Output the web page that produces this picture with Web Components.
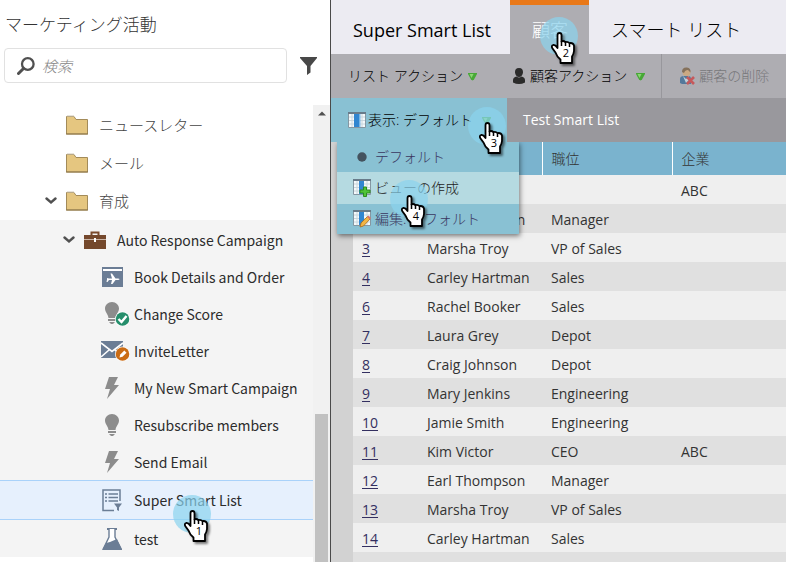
<!DOCTYPE html>
<html lang="ja">
<head>
<meta charset="utf-8">
<title>マーケティング活動</title>
<style>
html, body { margin: 0; height: 100%; }
body { background: #fff; font-family: "Open Sans", "Noto Sans CJK JP", sans-serif; font-size: 14px; color: #333; overflow: hidden; }
</style>
</head>
<body>
<app-shell>
  <activity-panel slot="side" heading="マーケティング活動">
    <tree-item level="1" icon="folder">ニュースレター</tree-item>
    <tree-item level="1" icon="folder">メール</tree-item>
    <tree-item level="1" icon="folder" expanded>育成</tree-item>
    <tree-group>
      <tree-item level="2" icon="case" expanded>Auto Response Campaign</tree-item>
      <tree-item level="3" icon="event">Book Details and Order</tree-item>
      <tree-item level="3" icon="bulbok">Change Score</tree-item>
      <tree-item level="3" icon="mail">InviteLetter</tree-item>
      <tree-item level="3" icon="bolt">My New Smart Campaign</tree-item>
      <tree-item level="3" icon="bulb">Resubscribe members</tree-item>
      <tree-item level="3" icon="bolt">Send Email</tree-item>
      <tree-item level="3" icon="smart" selected>Super Smart List<click-marker slot="marker" style="left:173px;top:14px">1</click-marker></tree-item>
      <tree-item level="3" icon="flask">test</tree-item>
    </tree-group>
  </activity-panel>
  <list-workspace></list-workspace>
</app-shell>

<script>
const ICONS = {
  folder: [22, 20, '<path d="M.5 1.5h7.5l2 3h11.500v14.500h-21z" fill="#e5c680" stroke="#a38b59"/><path d="M1 1h7" stroke="#cfc7b5"/><path d="M0 19h22" stroke="#8d7648"/>'],
  case: [22, 18, '<path d="M7.500 4V1.500h7V4" fill="none" stroke="#7a4a2c" stroke-width="2"/><path d="M0 4h22v4H0zM0 9h10v2h2V9h10v9H0z" fill="#74482c"/><path d="M0 8.500h22" stroke="#c9b4a6"/><path d="M10 7h2v4h-2z" fill="#fff"/>'],
  event: [21, 20, '<path d="M0 0h21v20H0z" fill="#6b7d95"/><path d="M1 2h19v2H1z" fill="#fff"/><path d="M5 11l2 .5h3L8.500 6.500h1.500l3.500 5h2.500c2 0 2 1.500 0 1.500h-2.500l-3 4H9l1-4H7l-1.500 2h-1l.5-2.500z" fill="#fff"/>'],
  bulb: [14, 22, '<path d="M7 0C3 0 0 3 0 6.500 0 10 3 12 3.500 16h7C11 12 14 10 14 6.500 14 3 11 0 7 0zM3 17h8v2H3zM4 20h6l-2 2H6z" fill="#8c8c8c"/>'],
  bulbok: [25, 24, '<path d="M7 0C3 0 0 3 0 6.500 0 10 3 12 3.500 16h7C11 12 14 10 14 6.500 14 3 11 0 7 0zM3 17h8v2H3zM4 20h6l-2 2H6z" fill="#8c8c8c"/><circle cx="17.500" cy="17" r="7.500" fill="#fff"/><circle cx="17.500" cy="17" r="6.800" fill="#258e6b"/><path d="M13.500 17l3 3 5-6" fill="none" stroke="#fff" stroke-width="2.400"/>'],
  mail: [29, 21, '<path d="M0 1h22v17H0z" fill="#6b7d95"/><path d="M0 3l11 8.500L22 3M0 17l8-7M22 17l-8-7" fill="none" stroke="#fff" stroke-width="1.600"/><circle cx="21.500" cy="14" r="7.500" fill="#fff"/><circle cx="21.500" cy="14" r="6.800" fill="#cb6c14"/><path d="M18.500 17.500l.8-3 4-4 2.200 2.200-4 4z" fill="#fff"/>'],
  bolt: [16, 22, '<path d="M5 0h9l-4 8h5L3 22l3-10H1z" fill="#8c8c8c"/>'],
  smart: [20, 23, '<path d="M12 21.500H1V1h17v11" fill="none" stroke="#6b7d95" stroke-width="1.500"/><path d="M3 5h2M3 8.500h2M3 12h2M6.500 5h9.500M6.500 8.500h9.500M6.500 12h9.500" stroke="#6b7d95" stroke-width="1.700"/><path d="M12 14.500h8l-3 4V22l-2-1v-2.500z" fill="#6b7d95"/>'],
  flask: [20, 22, '<path d="M5 1h10" stroke="#6b7d95" stroke-width="2"/><path d="M7 1v8L1.500 20.500h17L13 9V1" fill="#fff" stroke="#6b7d95" stroke-width="1.400"/><path d="M4 15l4-1 7-3 5 10v1H0z" fill="#6b7d95"/>'],
  chevron: [12, 8, '<path d="M1.500 1.500L6 5.500l4.500-4" fill="none" stroke="#505050" stroke-width="2.400" stroke-linecap="round"/>'],
  search: [18, 18, '<circle cx="10.800" cy="7" r="5.800" fill="none" stroke="#505050" stroke-width="2.300"/><path d="M6.500 11.500L1.500 16.500" stroke="#505050" stroke-width="3" stroke-linecap="round"/>'],
  funnel: [17, 18, '<path d="M0 0h17v1l-6.500 8v6.500L7 18V9L0 1z" fill="#484848"/>'],
  up: [8, 5, '<path d="M0 4.500L4 .5l4 4z" fill="#505050"/>'],
  caret: [9, 9, '<path d="M0 1h9v1L6 7.500 4.500 8.500 3 7.500 0 2z" fill="#47a836"/><path d="M1.500 2h4L3.500 6z" fill="#8bd673"/>'],
  person: [12, 16, '<path d="M6 0C3 0 1.800 2 2 4.500 2.200 7 4 9 6 9s3.800-2 4-4.500C10.200 2 9 0 6 0zM0 12c0-2 1.500-3 3.500-3.500Q6 10.500 8.500 8.500C10.500 9 12 10 12 12v2.500Q9 16 6 16T0 14.500z" fill="#2b2b2b"/>'],
  remove: [17, 18, '<path d="M1 16V12q0-3 4-3h4q3 0 3 3v5H3z" fill="#54799b"/><path d="M4 9l3 3 3-3v4l-3 3z" fill="#c3d0d8"/><circle cx="7.500" cy="5" r="4" fill="#cba982"/><path d="M3 5q0-5 5-4.500 4 .5 3.500 5L9 3q-3 0-4 3z" fill="#85715b"/><path d="M8 10l7 7M15 10l-7 7" stroke="#c6595b" stroke-width="2.600"/>'],
  grid: [18, 16, '<path d="M.5.500h17v15H.5z" fill="#f5f9fb" stroke="#8597a2"/><path d="M0 1h18" stroke="#687b8a" stroke-width="2"/><path d="M1 5h16M1 8.500h16M1 12h16M4 2v13M14 2v13" stroke="#c8d6dd"/><path d="M6 2h5v13H6z" fill="#3186d0"/><path d="M11 2h1.500v13H11z" fill="#79b6e5"/>'],
  gridadd: [18, 18, '<path d="M.5.500h17v15H.5z" fill="#f5f9fb" stroke="#8597a2"/><path d="M0 1h18" stroke="#687b8a" stroke-width="2"/><path d="M1 5h16M1 8.500h16M1 12h16M4 2v13M14 2v13" stroke="#c8d6dd"/><path d="M6 2h5v13H6z" fill="#3186d0"/><path d="M10.500 8h3v3h3.500v3h-3.500v3.500h-3V14H7v-3h3.500z" fill="#4fc337" stroke="#2c8c1c"/>'],
  gridedit: [18, 18, '<path d="M.5.500h17v15H.5z" fill="#f5f9fb" stroke="#8597a2"/><path d="M0 1h18" stroke="#687b8a" stroke-width="2"/><path d="M1 5h16M1 8.500h16M1 12h16M4 2v13M14 2v13" stroke="#c8d6dd"/><path d="M6 2h5v13H6z" fill="#3186d0"/><path d="M7 17l1-4 6.500-6.500 2.500 2.500L10.500 16z" fill="#f2b544" stroke="#a86b1c" stroke-width=".8"/><path d="M14 7l1.500-1.500L18 8l-1.200 1.200z" fill="#d9746f"/>'],
  dot: [10, 10, '<circle cx="5" cy="5" r="4.700" fill="#44535f"/>'],
  hand: [26, 34, '<path d="M6.500 14V3.200q0-2.200 2-2.200t2 2.200V9.500q1.800-1.200 4 .7 2-1 4 .9 3.500-.6 4.500 2.400v5.500q-.3 3-2 5.500V31H9.500v-3.500Q6 25 4.500 20.500L1.200 16q-1-2.500 1-3 2-.4 4.300 3z" fill="#fff" stroke="#000" stroke-width="1.800" stroke-linejoin="round"/><path d="M10.500 9v5M14.500 10.500V14M18.500 11.500V15" stroke="#000" stroke-width="1.500"/>']
};

function define(name, markup, setup) {
  const template = document.createElement('template');
  template.innerHTML = markup;
  customElements.define(name, class extends HTMLElement {
    constructor() {
      super();
      this.attachShadow({ mode: 'open' }).append(template.content.cloneNode(true));
    }
    connectedCallback() { if (setup) setup(this, this.shadowRoot); }
  });
}

define('ui-icon', '<style>:host{display:inline-flex;flex:none}svg{display:block}</style><span></span>', (el, root) => {
  const [w, h, body] = ICONS[el.getAttribute('name')];
  root.querySelector('span').innerHTML = `<svg width="${w}" height="${h}" viewBox="0 0 ${w} ${h}" aria-hidden="true">${body}</svg>`;
});

define('click-marker', `<style>
  :host{position:absolute;z-index:20;width:38px;height:38px;pointer-events:none;font:11px/12px "Open Sans",sans-serif;color:#000}
  .halo{width:38px;height:38px;border-radius:50%;background:#8ad3ee;opacity:.7}
  ui-icon{position:absolute;left:11px;top:15px;filter:drop-shadow(2px 2px 1px rgba(0,0,0,.5))}
  .num{position:absolute;left:20px;top:30px;width:12px;text-align:center}
</style><div class="halo"></div><ui-icon name="hand"></ui-icon><span class="num"><slot></slot></span>`);

define('app-shell', `<style>
  :host{display:grid;grid-template-columns:330px minmax(0,1fr);height:100vh;overflow:hidden}
  main{display:grid;border-left:1px solid #4a4a4a;min-width:0;overflow:hidden}
</style><slot name="side"></slot><main><slot></slot></main>`);

define('activity-panel', `<style>
  :host{display:flex;flex-direction:column;min-height:0;font-family:"Noto Sans CJK JP",sans-serif}
  h1{margin:0;padding:11px 5px 10px;font-size:17px;line-height:26px;font-weight:300;color:#333}
  form{display:flex;align-items:center;gap:13px;padding:1px 13px 0 4px;margin:0}
  label{flex:1;display:flex;align-items:center;gap:7px;box-sizing:border-box;height:35px;border:1px solid #e1e1e1;border-radius:4px;padding:0 12px}
  input{flex:1;min-width:0;border:0;outline:0;padding:0;background:none;font:italic 300 15px/24px "Noto Sans CJK JP",sans-serif}
  input::placeholder{color:#888;opacity:1}
  button{border:0;background:none;padding:0;display:flex}
  .body{flex:1;min-height:0;display:flex;margin-top:22px}
  nav{flex:1;min-width:0;overflow:hidden;padding-top:1px}
  .bar{width:17px;background:#f1f1f1;display:flex;flex-direction:column;align-items:center}
  .bar button{height:17px;align-items:center}
  .thumb{margin-top:292px;flex:1;width:13px;background:#c1c1c1}
</style>
<h1></h1>
<form role="search"><label><ui-icon name="search"></ui-icon><input type="text" placeholder="検索" aria-label="検索"></label><button type="button" aria-label="フィルター"><ui-icon name="funnel"></ui-icon></button></form>
<div class="body"><nav><slot></slot></nav><div class="bar"><button type="button" aria-label="上へ"><ui-icon name="up"></ui-icon></button><div class="thumb"></div></div></div>`,
(el, root) => { root.querySelector('h1').textContent = el.getAttribute('heading'); });

define('tree-group', '<style>:host{display:block;background:#f4f4f4;padding-top:1px;--row:37px;--size:14px}</style><slot></slot>');

define('tree-item', `<style>
  :host{display:flex;align-items:center;position:relative;height:var(--row,38px);box-sizing:border-box;font-size:var(--size,15px);line-height:24px;color:#2c2c2c}
  :host([level="1"]){padding-left:45px;font-weight:300;color:#444}
  :host([level="2"]){padding-left:63px}
  :host([level="3"]){padding-left:80px}
  :host([selected]){height:40px;background:#e6f0fd;border:solid #a9d2fa;border-width:1px 0}
  .toggle{width:12px;padding:0;border:0;background:none;display:flex;flex:none;margin-right:9px}
  .icon{width:22px;display:flex;justify-content:center;flex:none;margin-right:11px}
  .icon.wide{justify-content:flex-start}
  .icon.inset{padding-left:4px;width:18px}
  a{color:inherit;text-decoration:none;white-space:nowrap}
</style><span class="toggle"></span><span class="icon"></span><a href="#"><slot></slot></a><slot name="marker"></slot>`,
(el, root) => {
  const icon = el.getAttribute('icon');
  const box = root.querySelector('.icon');
  box.innerHTML = `<ui-icon name="${icon}"></ui-icon>`;
  if (icon === 'mail') box.classList.add('wide');
  if (icon === 'bulbok') box.classList.add('wide', 'inset');
  if (el.hasAttribute('expanded')) {
    const b = document.createElement('button');
    b.className = 'toggle';
    b.type = 'button';
    b.setAttribute('aria-label', '折りたたむ');
    b.innerHTML = '<ui-icon name="chevron"></ui-icon>';
    root.querySelector('.toggle').replaceWith(b);
  }
});

define('tab-item', `<style>
  :host{display:flex;position:relative}
  button{flex:1;border:0;padding:6px 21px 0 22px;height:54px;background:#ecebf2;color:#000;font:300 18px/26px "Open Sans","Noto Sans CJK JP",sans-serif;text-align:left;white-space:nowrap}
  :host([latin]) button{font-weight:400}
  :host([active]) button{background:#aeadb2;color:#fff;border-top:5px solid #e97818;padding-top:1px}
</style><button type="button" role="tab"><slot></slot></button><slot name="marker"></slot>`);

define('tool-button', `<style>
  :host{display:flex}
  button{display:flex;align-items:center;gap:5px;border:0;background:none;padding:0;color:#000;font:300 14px/22px "Open Sans","Noto Sans CJK JP",sans-serif;white-space:nowrap}
  button:disabled{color:#77777a;gap:3px}
</style><button type="button"><slot></slot></button>`,
(el, root) => { root.querySelector('button').disabled = el.hasAttribute('disabled'); });

define('view-menu', `<style>
  :host{display:flex;flex:none;position:relative;background:#89c1d3;width:176px;padding-left:17px;box-sizing:border-box}
  .open{display:flex;align-items:center;gap:2px;border:0;background:none;padding:0;color:#000;font:300 14px/22px "Open Sans","Noto Sans CJK JP",sans-serif;white-space:nowrap}
  .open ui-icon + span{margin-right:7px}
  ul{position:absolute;z-index:5;left:6px;top:44px;width:182px;margin:0;padding:0;list-style:none;background:#89c1d3;box-shadow:1px 2px 5px rgba(0,0,0,.5);clip-path:inset(0 -10px -10px -10px)}
  li{position:relative}
  li button{display:flex;align-items:center;gap:4px;width:100%;height:30px;border:0;background:none;padding:0 16px;color:#3a3660;font:300 14px/22px "Open Sans","Noto Sans CJK JP",sans-serif;white-space:nowrap}
  li:nth-child(2) button{height:32px;background:#b5dae1;color:#222}
  li:first-child button{padding-left:20px;gap:8px}
</style>
<button class="open" type="button"><ui-icon name="grid"></ui-icon><span>表示: デフォルト</span><ui-icon name="caret"></ui-icon></button>
<ul>
  <li><button type="button"><ui-icon name="dot"></ui-icon>デフォルト</button></li>
  <li><button type="button"><ui-icon name="gridadd"></ui-icon>ビューの作成</button><click-marker style="left:53px;top:8px">4</click-marker></li>
  <li><button type="button"><ui-icon name="gridedit"></ui-icon>編集: デフォルト</button></li>
</ul>
<click-marker style="left:137px;top:9px">3</click-marker>`);

define('people-table', `<style>
  :host{display:block;background:#d2d2d2;padding-left:22px;overflow:hidden}
  table{width:100%;border-collapse:collapse;table-layout:fixed;font:14px/20px "Open Sans","Noto Sans CJK JP",sans-serif;color:#333}
  .id{width:65px}.name{width:124px}.role{width:130px}
  th{height:33px;box-sizing:border-box;background:#7ab3ce;text-align:left;font-weight:300;padding:0 9px}
  td{height:29px;box-sizing:border-box;padding:2px 0 0 9px;white-space:nowrap}
  th.role,th.org{border-left:1px solid #fff}
  tr{background:#efefef}
  tbody tr:nth-child(even){background:#e0e0e0}
  a{color:#332f60;text-underline-offset:2px}
</style>
<table><thead><tr><th class="id"></th><th class="name"></th><th class="role">職位</th><th class="org">企業</th></tr></thead><tbody></tbody></table>`,
(el, root) => {
  const rows = [
    ['', '', '', 'ABC'], ['', 'Earl Thompson', 'Manager', ''], ['3', 'Marsha Troy', 'VP of Sales', ''],
    ['4', 'Carley Hartman', 'Sales', ''], ['6', 'Rachel Booker', 'Sales', ''], ['7', 'Laura Grey', 'Depot', ''],
    ['8', 'Craig Johnson', 'Depot', ''], ['9', 'Mary Jenkins', 'Engineering', ''], ['10', 'Jamie Smith', 'Engineering', ''],
    ['11', 'Kim Victor', 'CEO', 'ABC'], ['12', 'Earl Thompson', 'Manager', ''], ['13', 'Marsha Troy', 'VP of Sales', ''],
    ['14', 'Carley Hartman', 'Sales', ''], ['', '', '', '']
  ];
  root.querySelector('tbody').innerHTML = rows.map(([id, ...rest]) =>
    `<tr><td>${id ? `<a href="#">${id}</a>` : ''}</td>${rest.map(v => `<td>${v}</td>`).join('')}</tr>`).join('');
});

define('list-workspace', `<style>
  :host{display:flex;flex-direction:column;min-width:0;overflow:hidden}
  .tabs{display:flex;flex:none;position:relative;z-index:8}
  .tabs tab-item:first-child{width:179px}
  .tabs tab-item:last-child{flex:1}
  .tools{display:flex;flex:none;height:44px;background:#aeadb2}
  .tools tool-button{padding-left:17px}
  .tools .people{padding-left:36px;padding-right:16px;border-right:1px solid #98979c}
  .tools .people span{margin-right:4px}
  .view{display:flex;flex:none;height:44px;background:#99989d;position:relative;z-index:4}
  h2{margin:0;padding-left:16px;align-self:center;font:400 14px/22px "Open Sans",sans-serif;color:#fff}
  people-table{flex:1}
</style>
<div class="tabs" role="tablist"><tab-item latin>Super Smart List</tab-item><tab-item active>顧客<click-marker slot="marker" style="left:30px;top:17px">2</click-marker></tab-item><tab-item>スマート リスト</tab-item></div>
<div class="tools"><tool-button>リスト アクション<ui-icon name="caret"></ui-icon></tool-button><tool-button class="people"><ui-icon name="person"></ui-icon><span>顧客アクション</span><ui-icon name="caret"></ui-icon></tool-button><tool-button disabled><ui-icon name="remove"></ui-icon>顧客の削除</tool-button></div>
<div class="view"><view-menu></view-menu><h2>Test Smart List</h2></div>
<people-table></people-table>`);
</script>
</body>
</html>
